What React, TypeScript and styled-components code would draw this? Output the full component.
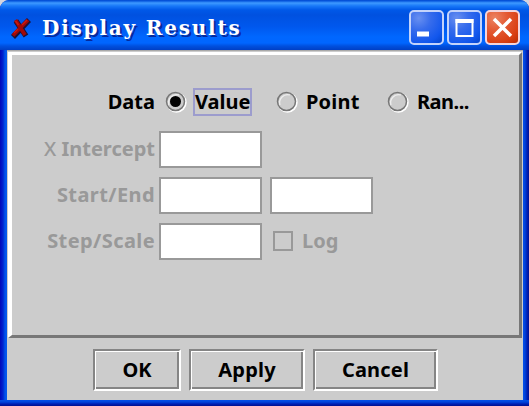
import React from "react";
import styled, { createGlobalStyle } from "styled-components";

const GlobalStyle = createGlobalStyle`
  * { box-sizing: border-box; }
  body { margin: 0; background: #d3d5df; overflow: hidden; }
`;

const Window = styled.div`
  width: 529px;
  height: 406px;
  display: flex;
  flex-direction: column;
  padding: 0 6px 6px 7px;
  border-radius: 9px 9px 0 0;
  background:
    linear-gradient(0deg, #00108f 0, #0020b4 2px, #0045dc 4px, #0450e8 6px, transparent 6px),
    linear-gradient(90deg, #0008b8 0, #0024d0 3px, #0053ea 5px, #0558ed 7px, transparent 7px),
    linear-gradient(270deg, #00108f 0, #0020b8 2px, #0042d8 4px, #0450ec 6px, transparent 6px),
    #0055e5;
  font-family: "Noto Sans", sans-serif;
`;

const TitleBar = styled.header`
  height: 50px;
  flex: none;
  margin: 0 -6px 0 -7px;
  padding: 5px 9px 0 10px;
  display: flex;
  align-items: center;
  border-radius: 9px 9px 0 0;
  background: linear-gradient(180deg, #0048d0 0, #0a5be0 1px, #3e9aff 3px, #1878f8 6px, #0058e8 10px, #0051e0 15px, #0058ee 27px, #0067ff 37px, #0066ff 43px, #0050df 46px, #003fc5 50px);
`;

const Title = styled.h1`
  margin: 0 0 0 10px;
  flex: 1;
  color: #fff;
  font: bold 20px/28px "DejaVu Serif", serif;
  letter-spacing: 1.8px;
  white-space: nowrap;
  text-shadow: 2px 2px 0 #06299c;
`;

const Controls = styled.div`
  display: flex;
  gap: 3px;
`;

const ControlButton = styled.button<{ $close?: boolean }>`
  width: 35px;
  height: 35px;
  padding: 0;
  display: grid;
  place-items: center;
  border: 2px solid ${(p) => (p.$close ? "#f4d5dc" : "#c3d3fb")};
  border-radius: 5px;
  background: ${(p) =>
    p.$close
      ? "radial-gradient(circle at 25% 20%, #ec8463 0, #e45b35 35%, #d93e12 75%, #b72c05 100%)"
      : "radial-gradient(circle at 25% 20%, #688ff0 0, #376cec 35%, #1257ed 75%, #0344cb 100%)"};
`;

const Body = styled.main`
  flex: 1;
  display: flex;
  flex-direction: column;
  padding: 1px 1px 0;
  background: #ccc;
  border-top: 1px solid #a9a9a9;
`;

const Panel = styled.section`
  height: 286px;
  padding: 28px 0 0 16px;
  border-style: solid;
  border-width: 3px 3px 3px 4px;
  border-color: #fff #777 #777 #fff;
  display: flex;
  flex-direction: column;
`;

const Row = styled.div<{ $height: number }>`
  height: ${(p) => p.$height}px;
  display: flex;
  align-items: center;
`;

const Text = styled.span<{ $spacing?: number }>`
  font-size: 20px;
  line-height: 26px;
  font-weight: bold;
  letter-spacing: ${(p) => p.$spacing ?? 0}px;
  white-space: nowrap;
`;

const RowLabel = styled(Text)<{ $muted?: boolean }>`
  width: 127px;
  margin-right: 4px;
  padding-bottom: 1px;
  text-align: right;
  color: ${(p) => (p.$muted ? "#999" : "#000")};
`;

const ThinLetter = styled.span`
  font-weight: 500;
`;

const Option = styled.label`
  width: 111px;
  flex: none;
  padding-left: 6px;
  display: flex;
  align-items: center;
`;

const OptionText = styled(Text)<{ $focused?: boolean }>`
  height: 28px;
  margin-left: 6px;
  border: 2px solid ${(p) => (p.$focused ? "#9c9ccd" : "transparent")};
  line-height: 23px;
`;

const Field = styled.input`
  width: 103px;
  height: 37px;
  margin-right: 8px;
  border: 2px solid #999;
  background: #fff;
`;

const CheckSquare = styled.span`
  width: 20px;
  height: 20px;
  margin: 0 9px 0 3px;
  border: 2px solid #999;
`;

const MutedText = styled(Text)`
  color: #999;
`;

const Footer = styled.footer`
  display: flex;
  gap: 8px;
  padding: 11px 0 0 85px;
`;

const PushButton = styled.button<{ $width: number }>`
  width: ${(p) => p.$width}px;
  height: 42px;
  padding: 0;
  display: grid;
  place-items: center;
  color: #000;
  background: #ccc;
  border: 2px solid;
  border-color: #858585 #fff #fff #858585;
  box-shadow: inset 1px 1px 0 #fff, inset -2px -2px 0 #858585;
  font-family: inherit;
`;

const Radio = ({ checked = false }: { checked?: boolean }) => (
  <svg width="22" height="22" viewBox="0 0 22 22">
    <circle cx="11.5" cy="11.5" r="9.2" fill="none" stroke="#fff" strokeWidth="2" />
    <circle cx="10.5" cy="10.5" r="9" fill="#ccc" stroke="#777" strokeWidth="1.5" />
    <path d="M4 14a8 8 0 0 1 10-10" fill="none" stroke="#eee" strokeWidth="1.3" />
    {checked && <circle cx="10.5" cy="10.5" r="5.5" fill="#000" />}
  </svg>
);

const AppIcon = () => (
  <svg width="22" height="22" viewBox="0 0 22 22">
    <path d="M6 4l10 15M19 3L3 20" fill="none" stroke="#1b1238" strokeWidth="5.5" />
    <path d="M5.5 3l9.5 15M18 3L3 18.5" fill="none" stroke="#a00808" strokeWidth="3.8" />
    <path d="M5.5 4l3 4M17 3l-5 5M4 16l4-4" fill="none" stroke="#c81b12" strokeWidth="1.5" />
  </svg>
);

export default function App() {
  return (
    <>
      <GlobalStyle />
      <Window>
        <TitleBar>
          <AppIcon />
          <Title>Display Results</Title>
          <Controls>
            <ControlButton aria-label="Minimize">
              <svg width="31" height="31"><path d="M6 19.5h12v5H6z" fill="#fff" /></svg>
            </ControlButton>
            <ControlButton aria-label="Maximize">
              <svg width="31" height="31">
                <path d="M7.5 8h16v16h-16z" fill="none" stroke="#fff" strokeWidth="2" />
                <path d="M6.5 7h18v4h-18z" fill="#fff" />
              </svg>
            </ControlButton>
            <ControlButton $close aria-label="Close">
              <svg width="31" height="31"><path d="M7 7l17 17M24 7L7 24" stroke="#fff" strokeWidth="3.5" /></svg>
            </ControlButton>
          </Controls>
        </TitleBar>
        <Body>
          <Panel>
            <Row $height={38}>
              <RowLabel>Data</RowLabel>
              <Option><Radio checked /><OptionText $focused>Value</OptionText></Option>
              <Option><Radio /><OptionText $spacing={0.2}>Point</OptionText></Option>
              <Option><Radio /><OptionText $spacing={-0.5}>Ran...</OptionText></Option>
            </Row>
            <Row $height={56}>
              <RowLabel $muted><ThinLetter>X</ThinLetter> Intercept</RowLabel>
              <Field disabled />
            </Row>
            <Row $height={36}>
              <RowLabel $muted $spacing={0.4}>Start/End</RowLabel>
              <Field disabled /><Field disabled />
            </Row>
            <Row $height={56}>
              <RowLabel $muted $spacing={0.4}>Step/Scale</RowLabel>
              <Field disabled />
              <CheckSquare /><MutedText>Log</MutedText>
            </Row>
          </Panel>
          <Footer>
            <PushButton $width={88}><Text>OK</Text></PushButton>
            <PushButton $width={116}><Text $spacing={0.2}>Apply</Text></PushButton>
            <PushButton $width={125}><Text $spacing={0.2}>Cancel</Text></PushButton>
          </Footer>
        </Body>
      </Window>
    </>
  );
}
